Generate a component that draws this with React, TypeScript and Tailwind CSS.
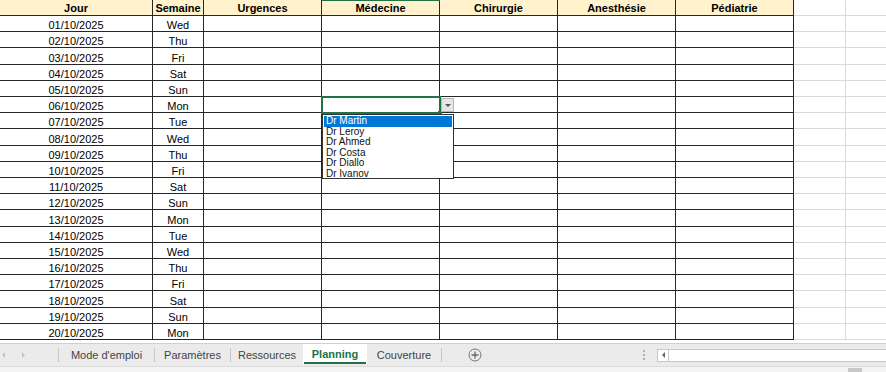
import React from 'react';

const days = ['Wed', 'Thu', 'Fri', 'Sat', 'Sun', 'Mon', 'Tue'];
const rows = Array.from({ length: 20 }, (_, i) => ({
  date: `${String(i + 1).padStart(2, '0')}/10/2025`,
  day: days[i % 7],
  tall: i === 2 || i === 7 || i === 12 || i === 17,
}));

const services = ['Urgences', 'Médecine', 'Chirurgie', 'Anesthésie', 'Pédiatrie'];
const doctors = ['Dr Martin', 'Dr Leroy', 'Dr Ahmed', 'Dr Costa', 'Dr Diallo', 'Dr Ivanov'];

function TabSep() {
  return <div className="w-px h-[14px] bg-[#c8c8c8] shrink-0" />;
}

export default function App() {
  return (
    <div className="w-[886px] h-[372px] overflow-hidden bg-white flex flex-col text-black" style={{ fontFamily: '"Liberation Sans", Arial, sans-serif' }}>
      {/* feuille */}
      <div className="relative h-[343px] overflow-hidden">
        {/* en-têtes */}
        <div className="flex h-[16px] text-[11px] font-bold leading-none">
          <div className="w-[153px] shrink-0 bg-[#fff2cc] border-r border-b border-[#262626] flex items-end justify-center pb-[1px]">Jour</div>
          <div className="w-[51px] shrink-0 bg-[#fff2cc] border-r border-b border-[#262626] flex items-end justify-center pb-[1px]">Semaine</div>
          {services.map((s) => (
            <div key={s} className="w-[118px] shrink-0 bg-[#fff2cc] border-r border-b border-[#262626] flex items-end justify-center pb-[1px]">{s}</div>
          ))}
          <div className="w-[52px] shrink-0 border-r border-b border-[#dadada]" />
          <div className="flex-1 border-b border-[#dadada]" />
        </div>

        {rows.map((r) => (
          <div key={r.date} className={r.tall ? 'flex h-[17px] text-[11px] leading-none' : 'flex h-[16px] text-[11px] leading-none'}>
            <div className="w-[153px] shrink-0 border-r border-b border-[#262626] flex items-end justify-center">{r.date}</div>
            <div className="w-[51px] shrink-0 border-r border-b border-[#262626] flex items-end justify-center">{r.day}</div>
            {services.map((s) => (
              <div key={s} className="w-[118px] shrink-0 border-r border-b border-[#262626]" />
            ))}
            <div className="w-[52px] shrink-0 border-r border-b border-[#dadada]" />
            <div className="flex-1 border-b border-[#dadada]" />
          </div>
        ))}

        {/* colonne sélectionnée */}
        <div className="absolute left-[322px] top-0 w-[118px] h-px bg-[#217346]" />

        {/* cellule active */}
        <div className="absolute left-[321px] top-[96px] w-[120px] h-[18px] border-2 border-[#217346]" />
        <div className="absolute left-[438px] top-[111px] w-[4px] h-[4px] bg-[#217346]" />

        {/* bouton liste */}
        <div className="absolute left-[441px] top-[98px] w-[13px] h-[14px] bg-[#e6e6e6] border border-[#b8b8b8] flex items-center justify-center">
          <div className="w-0 h-0 border-l-[3px] border-r-[3px] border-t-[3px] border-l-transparent border-r-transparent border-t-[#555]" />
        </div>

        {/* liste déroulante */}
        <div className="absolute left-[322px] top-[114px] w-[132px] h-[65px] bg-white border border-[#333] flex flex-col p-px text-[10px] leading-[10.5px]">
          {doctors.map((d, i) => (
            <div key={d} className={i === 0 ? 'h-[10.5px] bg-[#0078d7] text-white pl-[2px]' : 'h-[10.5px] text-[#111] pl-[2px]'}>{d}</div>
          ))}
        </div>
      </div>

      {/* onglets */}
      <div className="h-[23px] bg-[#ebebeb] border-t border-[#d0d0d0] flex items-center text-[11px] text-[#444]">
        <div className="w-[58px] shrink-0 flex items-center pl-[2px]">
          <div className="w-0 h-0 border-t-[3px] border-b-[3px] border-r-[3px] border-t-transparent border-b-transparent border-r-[#c4c4c4]" />
          <div className="w-0 h-0 border-t-[3px] border-b-[3px] border-l-[3px] border-t-transparent border-b-transparent border-l-[#c4c4c4] ml-[17px]" />
        </div>
        <TabSep />
        <div className="w-[95px] shrink-0 text-center">Mode d'emploi</div>
        <TabSep />
        <div className="w-[75px] shrink-0 text-center">Paramètres</div>
        <TabSep />
        <div className="w-[72px] shrink-0 text-center">Ressources</div>
        <div className="w-[64px] shrink-0 h-[20px] self-start bg-white flex items-center justify-center relative">
          <span className="font-bold text-[#217346]">Planning</span>
          <div className="absolute left-[1px] right-[1px] bottom-0 h-[2px] bg-[#217346]" />
        </div>
        <div className="w-[74px] shrink-0 text-center">Couverture</div>
        <TabSep />
        <div className="ml-[26px] shrink-0">
          <svg width="14" height="14" viewBox="0 0 14 14">
            <circle cx="7" cy="7" r="6" fill="none" stroke="#777" strokeWidth="1" />
            <path d="M7 3.5v7M3.5 7h7" stroke="#666" strokeWidth="1.3" />
          </svg>
        </div>
        <div className="ml-[161px] shrink-0 flex flex-col gap-[2px]">
          <div className="w-[2px] h-[2px] bg-[#b0b0b0]" />
          <div className="w-[2px] h-[2px] bg-[#b0b0b0]" />
          <div className="w-[2px] h-[2px] bg-[#b0b0b0]" />
        </div>
        <div className="ml-[12px] shrink-0 w-[12px] h-[13px] bg-white border border-[#c8c8c8] flex items-center justify-center">
          <div className="w-0 h-0 border-t-[3px] border-b-[3px] border-r-[3px] border-t-transparent border-b-transparent border-r-[#666]" />
        </div>
        <div className="flex-1 h-[13px] bg-white border border-[#c8c8c8] border-l-0 border-r-0" />
      </div>

      {/* barre d'état */}
      <div className="flex-1 bg-[#f3f3f3] border-t border-[#dcdcdc] relative">
        <div className="absolute left-[848px] top-[1px] w-[14px] h-[4px] bg-[#c8c8c8]" />
      </div>
    </div>
  );
}
